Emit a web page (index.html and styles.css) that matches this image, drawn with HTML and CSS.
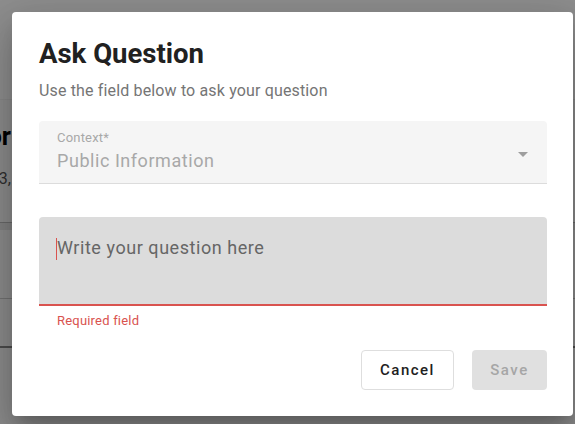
FILE: index.html
```html
<!DOCTYPE html>
<html>
<head>
<meta charset="utf-8">
<link rel="stylesheet" href="styles.css">
</head>
<body>
<div class="page">
  <div class="page-top"></div>
  <div class="page-head">
    <h2 class="page-title">Question Board Monitor</h2>
    <p class="page-sub">Updated 12 May 2023,</p>
  </div>
  <div class="page-band"></div>
  <div class="page-row"></div>
  <div class="page-row last"></div>
</div>
<div class="overlay"></div>
<div class="dialog" role="dialog">
  <h1 class="title">Ask Question</h1>
  <p class="subtitle">Use the field below to ask your question</p>
  <div class="select">
    <div class="select-text">
      <span class="select-label">Context*</span>
      <span class="select-value">Public Information</span>
    </div>
    <span class="arrow"></span>
  </div>
  <div class="textarea">
    <span class="caret"></span><span class="placeholder">Write your question here</span>
  </div>
  <p class="helper">Required field</p>
  <div class="actions">
    <button class="btn cancel">Cancel</button>
    <button class="btn save" disabled>Save</button>
  </div>
</div>
</body>
</html>
```

FILE: styles.css
```css
* { box-sizing: border-box; }
html, body { margin: 0; padding: 0; }
body {
  width: 575px;
  height: 424px;
  overflow: hidden;
  font-family: Roboto, "Liberation Sans", sans-serif;
  background: #fafafa;
  position: relative;
}
.page { width: 575px; }
.page-top { height: 100px; background: #fdfdfd; border-bottom: 1px solid #f0f0f0; }
.page-head {
  width: 11px;
  height: 122px;
  padding-top: 21px;
  display: flex;
  flex-direction: column;
  align-items: flex-end;
}
.page-title { margin: 0; font-size: 25px; font-weight: 700; color: #000; line-height: 32px; white-space: nowrap; }
.page-sub { margin: 16px 0 0; font-size: 16px; color: #555; white-space: nowrap; }
.page-band { height: 8px; background: #e8e8e8; border-top: 1px solid #bbb; }
.page-row { height: 69px; border-bottom: 1px solid #ccc; }
.page-row.last { border-bottom: 2px solid #888; height: 49px; }
.overlay {
  position: absolute; inset: 0;
  background: rgba(0, 0, 0, 0.44);
}
.dialog {
  position: absolute;
  left: 12px; top: 12px;
  width: 561px; height: 404px;
  background: #fff;
  border-radius: 4px;
  box-shadow: 0 11px 15px -7px rgba(0,0,0,.2), 0 24px 38px 3px rgba(0,0,0,.14), 0 9px 46px 8px rgba(0,0,0,.12);
  padding: 24px 26px 0 27px;
  display: flex;
  flex-direction: column;
}
.title {
  margin: 0;
  font-size: 27.5px;
  font-weight: 700;
  line-height: 36px;
  color: #212121;
}
.subtitle {
  margin: 9px 0 0;
  font-size: 16px;
  letter-spacing: 0.15px;
  line-height: 20px;
  color: #757575;
}
.select {
  margin-top: 20px;
  height: 63px;
  background: #f5f5f5;
  border-radius: 4px 4px 0 0;
  border-bottom: 1px solid #dcdcdc;
  display: flex;
  align-items: flex-start;
  justify-content: space-between;
  padding: 9px 19px 0 18px;
}
.select-text { display: flex; flex-direction: column; }
.select-label { font-size: 13px; line-height: 16px; color: #a8a8a8; letter-spacing: 0.2px; }
.select-value { font-size: 18px; line-height: 24px; color: #a8a8a8; margin-top: 3px; letter-spacing: 0.55px; }
.arrow {
  margin-top: 22px;
  width: 0; height: 0;
  border-left: 5px solid transparent;
  border-right: 5px solid transparent;
  border-top: 5px solid #9e9e9e;
}
.textarea {
  margin-top: 33px;
  height: 89px;
  background: #dcdcdc;
  border-radius: 4px 4px 0 0;
  border-bottom: 2px solid #d9534f;
  padding: 19px 18px 0 17px;
  display: flex;
  align-items: flex-start;
}
.caret { width: 1px; height: 22px; background: #d9534f; margin-top: 2px; }
.placeholder { font-size: 18px; line-height: 24px; color: #666; letter-spacing: 0.55px; }
.helper {
  margin: 6px 0 0 18px;
  font-size: 13px;
  line-height: 17px;
  color: #d9534f;
  letter-spacing: 0.2px;
}
.actions {
  margin-top: 21px;
  display: flex;
  justify-content: flex-end;
  gap: 18px;
}
.btn {
  height: 40px;
  border-radius: 4px;
  font-family: Roboto, "Liberation Sans", sans-serif;
  font-size: 15px;
  font-weight: 500;
  letter-spacing: 1.5px;
  padding: 0;
}
.cancel { width: 93px; background: #fff; border: 1px solid #dedede; color: #212121; }
.save { width: 75px; background: #e0e0e0; border: none; color: #a6a6a6; }
```
